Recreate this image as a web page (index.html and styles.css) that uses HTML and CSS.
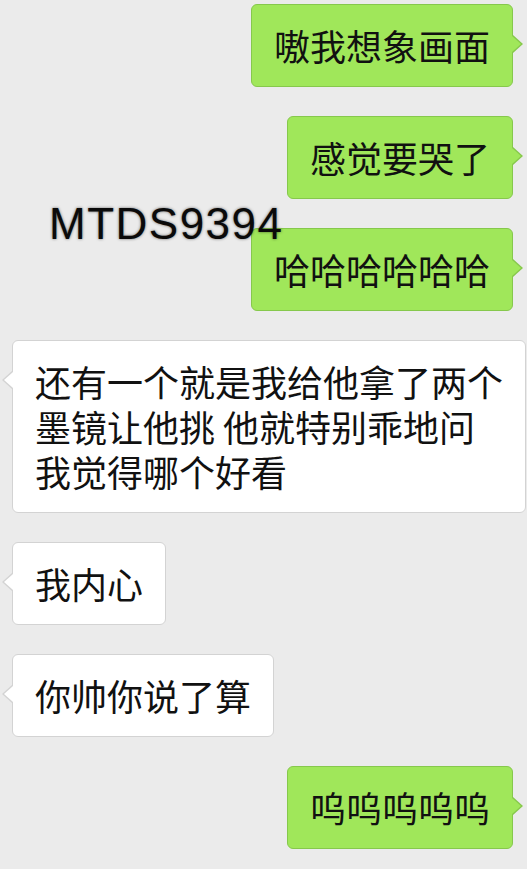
FILE: index.html
```html
<!DOCTYPE html>
<html lang="zh-CN">
<head>
  <meta charset="UTF-8">
  <meta name="viewport" content="width=device-width, initial-scale=1.0">
  <title>聊天记录</title>
  <link rel="stylesheet" href="styles.css">
</head>
<body>
  <div class="chat">
    <div class="row row-me"><div class="bubble bubble-me">嗷我想象画面</div></div>
    <div class="row row-me"><div class="bubble bubble-me">感觉要哭了</div></div>
    <div class="row row-me"><div class="bubble bubble-me">哈哈哈哈哈哈</div></div>
    <div class="row row-other">
      <div class="bubble bubble-other">还有一个就是我给他拿了两个<br>墨镜让他挑 他就特别乖地问<br>我觉得哪个好看</div>
    </div>
    <div class="row row-other"><div class="bubble bubble-other">我内心</div></div>
    <div class="row row-other"><div class="bubble bubble-other">你帅你说了算</div></div>
    <div class="row row-me"><div class="bubble bubble-me">呜呜呜呜呜</div></div>

    <!-- watermark sits on top of the messages -->
    <div class="watermark">MTDS9394</div>
  </div>
</body>
</html>
```

FILE: styles.css
```css
body {
  margin: 0;
  background: #ebebeb;
  font-family: "Noto Sans CJK SC", "Noto Sans", sans-serif;
  color: #111;
}
.chat {
  position: relative;
  display: flex;
  flex-direction: column;
  gap: 29px;
  padding-top: 4px;
  height: 865px;
  overflow: hidden;
}
.row {
  display: flex;
}
.row-me {
  justify-content: flex-end;
  padding-right: 14px;
}
.row-other {
  justify-content: flex-start;
  padding-left: 12px;
}
.bubble {
  position: relative;
  font-size: 36px;
  line-height: 45px;
  padding: 18px 22px 18px 22px;
  border-radius: 6px;
  white-space: nowrap;
}
.bubble-me {
  background: #a0e75a;
  border: 1px solid #86c84c;
}
.bubble-other {
  background: #fff;
  border: 1px solid #d3d3d3;
}

/* tails */
.bubble::before,
.bubble::after {
  content: "";
  position: absolute;
  top: 30px;
  border-style: solid;
  border-color: transparent;
}
.bubble-me::before {
  right: -11px;
  border-width: 9px 0 9px 10px;
  border-left-color: #86c84c;
}
.bubble-me::after {
  right: -9px;
  top: 31px;
  border-width: 8px 0 8px 9px;
  border-left-color: #a0e75a;
}
.bubble-other::before {
  left: -11px;
  border-width: 9px 10px 9px 0;
  border-right-color: #d3d3d3;
}
.bubble-other::after {
  left: -9px;
  top: 31px;
  border-width: 8px 9px 8px 0;
  border-right-color: #fff;
}

.watermark {
  position: absolute;
  left: 49px;
  top: 202px;
  font-family: "Liberation Sans", Arial, sans-serif;
  font-size: 44px;
  line-height: 44px;
  letter-spacing: 1.5px;
  color: #0a0a0a;
  text-shadow: 0 0 3px rgba(0, 0, 0, 0.55);
}
```
